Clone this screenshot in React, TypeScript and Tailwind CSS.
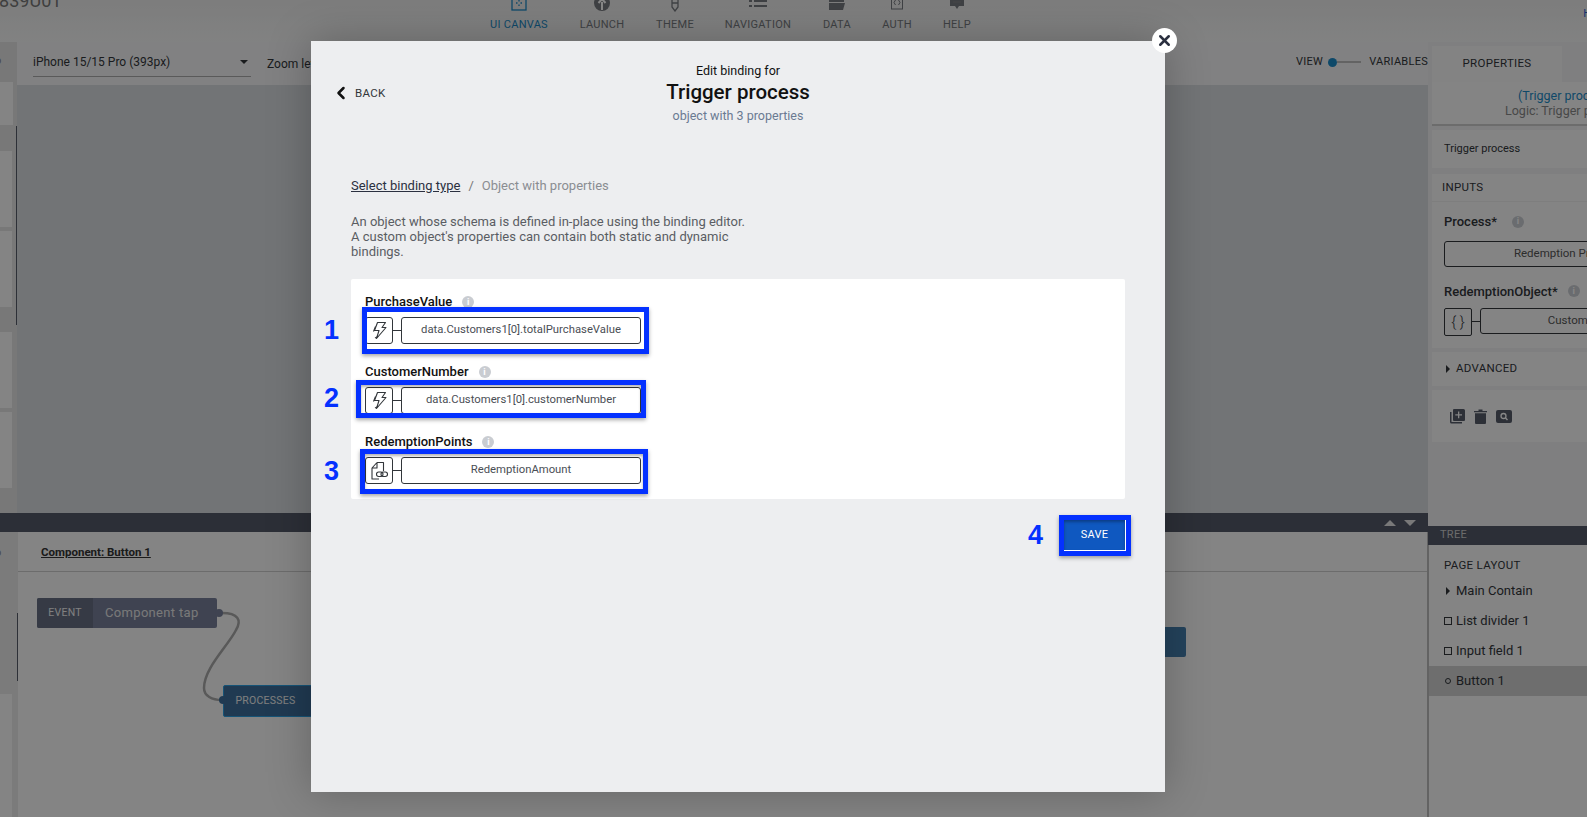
import { ChevronLeft, X } from "lucide-react";

function NavIcon({ name }: { name: string }) {
  if (name === "UI CANVAS")
    return (
      <svg width="18" height="18" viewBox="0 0 18 18" fill="none" stroke="currentColor" strokeWidth="1.3">
        <rect x="2" y="2" width="14" height="14" />
        <path d="M9 6v1.5M9 10.5V12M6 9h1.5M10.5 9H12" />
      </svg>
    );
  if (name === "LAUNCH")
    return (
      <svg width="18" height="18" viewBox="0 0 18 18">
        <circle cx="9" cy="9" r="8" fill="currentColor" />
        <path d="M9 16V8M5.5 9L9 5l3.5 4" fill="none" stroke="#fff" strokeWidth="2" />
      </svg>
    );
  if (name === "THEME")
    return (
      <svg width="18" height="18" viewBox="0 0 18 18" fill="none" stroke="currentColor" strokeWidth="1.3">
        <path d="M6 1v12l3 4 3-4V1M6 9h6" />
      </svg>
    );
  if (name === "NAVIGATION")
    return (
      <svg width="18" height="18" viewBox="0 0 18 18" fill="none" stroke="currentColor" strokeWidth="2">
        <path d="M5 5h13M5 10h13M0 5h3M0 10h3" transform="translate(0 2)" />
      </svg>
    );
  if (name === "DATA")
    return (
      <svg width="18" height="18" viewBox="0 0 18 18" fill="currentColor">
        <path d="M1 3h6l2 2h7v3H1zM1 9h16l-2 7H1z" />
      </svg>
    );
  if (name === "AUTH")
    return (
      <svg width="18" height="18" viewBox="0 0 18 18" fill="none" stroke="currentColor" strokeWidth="1">
        <rect x="3.5" y="2" width="11" height="13" />
        <path d="M7.5 6L6 8.500l1.500 2.500M10.500 6L12 8.500l-1.500 2.500" />
      </svg>
    );
  return (
    <svg width="18" height="18" viewBox="0 0 18 18" fill="currentColor">
      <path d="M2 1h14v11h-5l-2 3-2-3H2z" />
      <path d="M5 5h8M5 8h8" stroke="#888" strokeWidth="1" />
    </svg>
  );
}

const navItems = [
  { label: "UI CANVAS", width: "w-[82px]", active: true },
  { label: "LAUNCH", width: "w-[84px]" },
  { label: "THEME", width: "w-[62px]" },
  { label: "NAVIGATION", width: "w-[104px]" },
  { label: "DATA", width: "w-[54px]" },
  { label: "AUTH", width: "w-[66px]", raised: true },
  { label: "HELP", width: "w-[54px]" },
];

function InfoDot() {
  return (
    <span className="flex h-[12px] w-[12px] items-center justify-center rounded-full bg-[#c9ccd1] text-[9px] leading-none font-bold text-white">
      i
    </span>
  );
}

function Bolt() {
  return (
    <svg width="17" height="19" viewBox="0 0 17 19" fill="none" stroke="#32363a" strokeWidth="1.1" strokeLinejoin="round">
      <path d="M6.5 1.500h8l-3.500 5h4l-9.500 11 2.500-8H3.500z" />
      <path d="M4.500 5.500l-2 5M7 15.500l-3 1.500" />
    </svg>
  );
}

function DocLink() {
  return (
    <svg width="19" height="20" viewBox="0 0 19 20" fill="none" stroke="#32363a" strokeWidth="1.1" strokeLinejoin="round">
      <path d="M7 1.500h6.500V10M7 1.500L2 7v11h7M2 7h5V1.500" />
      <rect x="6.500" y="11" width="6.500" height="4.500" rx="2.200" />
      <rect x="11" y="11" width="6.500" height="4.500" rx="2.200" />
    </svg>
  );
}

function Binding({ label, value, icon, mark }: { label: string; value: string; icon: React.ReactNode; mark: string }) {
  return (
    <div>
      <div className="flex h-[16px] items-center gap-[10px] text-[13px] font-medium text-[#111]">
        {label}
        <InfoDot />
      </div>
      <div className="relative mt-[7px] flex h-[27px] w-[276px] items-center">
        <div className="flex h-[27px] w-[28px] items-center justify-center rounded-[3px] border border-[#32363a] bg-white">{icon}</div>
        <div className="h-px w-[8px] bg-[#32363a]" />
        <div className="flex h-[27px] flex-1 items-center justify-center rounded-[3px] border border-[#32363a] bg-white text-[11.3px] text-[#4a4e55]">
          {value}
        </div>
        <div className={mark} />
      </div>
    </div>
  );
}

function Card({ className = "", children }: { className?: string; children?: React.ReactNode }) {
  return <div className={`bg-[#fafafa] ${className}`}>{children}</div>;
}

export default function App() {
  return (
    <div className="relative flex h-screen w-full flex-col overflow-hidden bg-white font-['Roboto',sans-serif] text-[#32363a]">
      {/* Top bar, scrolled a little past its top edge */}
      <header className="relative flex h-[42px] shrink-0 items-end overflow-hidden bg-gradient-to-b from-[#ececec] to-[#f4f5f5] pb-[9px]">
        <span className="absolute top-[-13px] left-[-11px] text-[18px] text-[#777]">1839U01</span>
        <nav className="ml-[478px] flex">
          {navItems.map(({ label, width, active, raised }) => (
            <div key={label} className={`flex ${width} flex-col items-center ${raised ? "mb-[2px]" : ""} ${active ? "text-[#1c8ac7]" : "text-[#777b80]"}`}>
              <NavIcon name={label} />
              <span className="mt-[6px] text-[11px] leading-[13px] tracking-wide">{label}</span>
            </div>
          ))}
        </nav>
        <span className="absolute top-[6px] right-[-4px] text-[11px] text-[#2f5fd0]">H</span>
      </header>

      <div className="flex min-h-0 flex-1">
        <div className="flex min-w-0 flex-1 flex-col">
          {/* Preview area */}
          <div className="flex h-[471px] shrink-0">
            <aside className="relative w-[17px] shrink-0 bg-[#e2e2e2]">
              <div className="h-[40px] overflow-hidden pt-[11px] text-[11px] text-[#888]"><span className="ml-[-5px]">o</span></div>
              <Card className="h-[43px] w-[13px]" />
              <Card className="mt-[26px] h-[76px] w-[12px]" />
              <Card className="mt-[4px] h-[76px] w-[12px]" />
              <Card className="mt-[25px] h-[76px] w-[12px]" />
              <Card className="mt-[4px] h-[76px] w-[12px]" />
              <div className="absolute top-[84px] right-0 h-[199px] w-px bg-[#555b69]" />
            </aside>
            <div className="flex min-w-0 flex-1 flex-col">
              <div className="flex h-[43px] shrink-0 items-start bg-[#f4f4f5]">
                <div className="mt-[10px] ml-[16px] flex h-[25px] w-[218px] items-center justify-between border-b border-[#aaa] pb-[4px] text-[12px]">
                  iPhone 15/15 Pro (393px)
                  <span className="mr-[3px] h-0 w-0 border-x-[4px] border-t-[4px] border-x-transparent border-t-[#32363a]" />
                </div>
                <span className="mt-[13px] ml-[16px] text-[12px]">Zoom level</span>
                <div className="ml-auto flex h-[40px] items-center text-[11px] tracking-wide">
                  <span>VIEW</span>
                  <span className="ml-[5px] h-[9px] w-[9px] rounded-full bg-[#1c8ac7]" />
                  <span className="h-[2px] w-[24px] bg-[#bbb]" />
                  <span className="ml-[8px]">VARIABLES</span>
                </div>
              </div>
              <div className="flex-1 bg-[#d8dcdf]" />
            </div>
          </div>

          {/* Resize bar */}
          <div className="flex h-[19px] shrink-0 items-center justify-end gap-[8px] bg-[#535968] pr-[12px]">
            <span className="h-0 w-0 border-x-[6px] border-b-[6px] border-x-transparent border-b-[#e5e5e5]" />
            <span className="h-0 w-0 border-x-[6px] border-t-[6px] border-x-transparent border-t-[#e5e5e5]" />
          </div>

          {/* Logic canvas */}
          <div className="flex min-h-0 flex-1 bg-[#fafafa]">
            <aside className="relative w-[18px] shrink-0 bg-[#e8e8e8] pt-[13px] text-[11px] text-[#888]">
              <span className="ml-[-5px]">o</span>
              <div className="absolute top-[81px] right-0 h-[68px] w-px bg-[#555b69]" />
              <Card className="absolute top-[162px] h-[124px] w-[12px]" />
            </aside>
            <div className="relative min-w-0 flex-1 border-r border-[#bbb]">
              <div className="h-[40px] border-b border-[#ccc] pt-[12px] pl-[23px] text-[11.5px] leading-[16px] font-bold text-[#333]">
                <span className="underline">Component: Button 1</span>
              </div>
              {/* nodes sit at free positions on the canvas */}
              <div className="absolute top-[66px] left-[19px] flex h-[30px] w-[180px] items-center rounded-[2px] bg-[#777f99]">
                <span className="flex h-full w-[56px] items-center justify-center rounded-l-[2px] bg-[#666e82] text-[10.5px] tracking-wide text-[#f2f2f2]">EVENT</span>
                <span className="ml-[12px] text-[13px] tracking-wide text-[#e5e5e5]">Component tap</span>
              </div>
              <div className="absolute top-[153px] left-[205px] flex h-[32px] w-[120px] items-center rounded-[2px] border border-[#2a9fe0] bg-[#3d6f9c]">
                <span className="flex h-full w-[83px] items-center justify-center text-[10.5px] tracking-wide text-[#efefef]">PROCESSES</span>
              </div>
              <div className="absolute top-[95px] left-[1100px] h-[30px] w-[68px] rounded-[2px] bg-[#447fae]" />
              <svg className="absolute top-[70px] left-[170px]" width="70" height="110" viewBox="0 0 70 110" fill="none">
                <path d="M34 11C50 11 54 18 48 28C40 44 16 66 16 86C16 94 24 98 34 98" stroke="#a8a8a8" strokeWidth="2.500" />
                <circle cx="31" cy="11" r="4" fill="#777f99" />
                <circle cx="35" cy="98" r="4" fill="#3d6f9c" />
              </svg>
            </div>
          </div>
        </div>

        {/* Right panel */}
        <aside className="flex w-[159px] shrink-0 flex-col overflow-hidden bg-[#f0f0f1]">
          <div className="h-[484px] shrink-0 pl-[4px]">
            <div className="mt-[4px] flex h-[36px] w-[130px] items-center justify-center bg-[#f8f8f8] text-[11.5px] tracking-wide">PROPERTIES</div>
            <div className="flex h-[44px] w-[258px] flex-col items-start border-b-2 border-[#ccc] bg-[#fafafa] pl-[86px] text-[12.5px] leading-[15px]">
              <span className="mt-[6px] whitespace-nowrap text-[#1c8ac7]">(Trigger process)</span>
              <span className="ml-[-13px] whitespace-nowrap text-[#888]">Logic: Trigger process</span>
            </div>
            <Card className="mt-[4px] flex h-[38px] w-[258px] items-center pl-[12px] text-[11px]">Trigger process</Card>
            <Card className="mt-[6px] h-[174px] w-[258px]">
              <div className="flex h-[28px] items-center border-b border-[#eee] pl-[10px] text-[11.5px] tracking-wide">INPUTS</div>
              <div className="mt-[10px] flex items-center gap-[15px] pl-[12px] text-[13px] font-medium">Process*<InfoDot /></div>
              <div className="mt-[9px] ml-[12px] flex h-[26px] items-center justify-center rounded-[3px] border border-[#32363a] text-[11.5px] text-[#555]">Redemption Process</div>
              <div className="mt-[15px] flex items-center gap-[10px] pl-[12px] text-[13px] font-medium">RedemptionObject*<InfoDot /></div>
              <div className="mt-[7px] ml-[12px] flex items-start">
                <div className="flex h-[28px] w-[28px] items-center justify-center rounded-[2px] border border-[#32363a] text-[15px] font-light">{"{ }"}</div>
                <div className="mt-[13px] h-px w-[8px] bg-[#32363a]" />
                <div className="flex h-[26px] flex-1 items-center justify-center rounded-[3px] border border-[#32363a] text-[11.5px] text-[#555]">Custom object</div>
              </div>
            </Card>
            <Card className="mt-[4px] flex h-[34px] w-[258px] items-center pl-[14px] text-[11.5px] tracking-wide">
              <span className="mr-[6px] h-0 w-0 border-y-[4px] border-l-[4px] border-y-transparent border-l-[#32363a]" />
              ADVANCED
            </Card>
            <Card className="mt-[4px] flex h-[52px] w-[258px] items-center gap-[9px] pl-[18px] text-[#555b69]">
              <svg width="15" height="15" viewBox="0 0 15 15" fill="currentColor">
                <path d="M0 3h1.500v10H12v1.500H1.500A1.500 1.500 0 0 1 0 13z" />
                <path fillRule="evenodd" d="M4 0h9.500A1.500 1.500 0 0 1 15 1.500V11a1 1 0 0 1-1 1H4a1 1 0 0 1-1-1V1a1 1 0 0 1 1-1zm4 2.500v2.700H5.300v1.300H8v2.700h1.300V6.500H12V5.200H9.300V2.500z" />
              </svg>
              <svg width="13" height="15" viewBox="0 0 13 15" fill="currentColor">
                <path d="M0 2h4.500V.500h4V2H13v1.300H0zM1 4.300h11V14a1 1 0 0 1-1 1H2a1 1 0 0 1-1-1z" />
              </svg>
              <svg width="16" height="13" viewBox="0 0 16 13">
                <rect width="16" height="13" rx="2" fill="currentColor" />
                <circle cx="7.500" cy="6" r="2.500" fill="none" stroke="#fff" strokeWidth="1.300" />
                <path d="M9.500 8l2 2" stroke="#fff" strokeWidth="1.500" />
              </svg>
            </Card>
          </div>
          <div className="flex h-[19px] shrink-0 items-center bg-[#535968] pl-[12px] text-[11px] tracking-wide text-[#ccc]">TREE</div>
          <div className="flex-1 border-l border-[#bbb] bg-[#fafafa]">
            <div className="h-[13px]" />
            <div className="pl-[15px] text-[11.5px] leading-[14px] tracking-wide">PAGE LAYOUT</div>
            <div className="mt-[4px] text-[13px]">
              <div className="flex h-[30px] items-center pl-[16px]"><span className="mr-[6px] ml-[1px] h-0 w-0 border-y-[4px] border-l-[4px] border-y-transparent border-l-[#32363a]" />Main Contain</div>
              <div className="flex h-[30px] items-center pl-[15px]"><span className="mr-[4px] h-[8px] w-[8px] border border-[#32363a]" />List divider 1</div>
              <div className="flex h-[30px] items-center pl-[15px]"><span className="mr-[4px] h-[8px] w-[8px] border border-[#32363a]" />Input field 1</div>
              <div className="flex h-[30px] items-center bg-[#d0d0d0] pl-[15px]"><span className="mx-[1px] mr-[5px] h-[6px] w-[6px] rounded-full border border-[#32363a]" />Button 1</div>
            </div>
          </div>
        </aside>
      </div>

      {/* Dialog backdrop */}
      <div className="absolute inset-0 bg-black/[0.47]" />

      {/* Edit binding dialog */}
      <div className="absolute top-[41px] left-[311px] flex h-[751px] w-[854px] flex-col bg-[#edeef0] shadow-[0_0_40px_rgba(0,0,0,0.25)]">
        <button className="absolute top-[-13px] right-[-12px] flex h-[25px] w-[25px] items-center justify-center rounded-full bg-white">
          <X size={17} strokeWidth={3.500} className="text-[#2b3040]" />
        </button>
        <div className="relative h-[136px] shrink-0 pt-[22px] text-center">
          <div className="absolute top-[42px] left-[20px] flex items-center gap-[4px] text-[11.5px] leading-[20px] tracking-wide text-[#32363a]">
            <ChevronLeft size={20} strokeWidth={3} className="text-[#111]" />
            BACK
          </div>
          <div className="text-[12.5px] leading-[16px] text-[#111]">Edit binding for</div>
          <div className="text-[20.5px] leading-[26px] font-medium text-[#111]">Trigger process</div>
          <div className="mt-[1px] text-[12.5px] leading-[20px] text-[#6a7a92]">object with 3 properties</div>
        </div>
        <div className="pl-[40px] text-[13px]">
          <div className="flex leading-[18px]">
            <span className="text-[#2b3040] underline">Select binding type</span>
            <span className="mx-[8px] text-[#777]">/</span>
            <span className="text-[#8a8d92]">Object with properties</span>
          </div>
          <p className="mt-[19px] w-[400px] leading-[15px] text-[#5a5d63]">
            An object whose schema is defined in-place using the binding editor.
            <br />
            A custom object's properties can contain both static and dynamic bindings.
          </p>
          <div className="relative mt-[20px] flex h-[220px] w-[774px] flex-col gap-[20px] rounded-[2px] bg-white pt-[15px] pl-[14px]">
            <Binding
              label="PurchaseValue"
              value="data.Customers1[0].totalPurchaseValue"
              icon={<Bolt />}
              mark="absolute top-[-10px] left-[-3px] h-[47px] w-[287px] border-[5px] border-[#0431ff] shadow-[0_2px_4px_rgba(0,0,0,0.35)]"
            />
            <Binding
              label="CustomerNumber"
              value="data.Customers1[0].customerNumber"
              icon={<Bolt />}
              mark="absolute top-[-7px] left-[-9px] h-[38px] w-[290px] border-[5px] border-[#0431ff] shadow-[0_2px_4px_rgba(0,0,0,0.35),inset_0_2px_3px_rgba(0,0,0,0.3)]"
            />
            <Binding
              label="RedemptionPoints"
              value="RedemptionAmount"
              icon={<DocLink />}
              mark="absolute top-[-8px] left-[-5px] h-[45px] w-[288px] border-[5px] border-[#0431ff] shadow-[0_2px_4px_rgba(0,0,0,0.35),inset_0_2px_3px_rgba(0,0,0,0.3)]"
            />
            <span className="absolute top-[38px] left-[-27px] font-['Liberation_Sans',sans-serif] text-[27px] leading-[27px] font-bold text-[#0431ff]">1</span>
            <span className="absolute top-[106px] left-[-27px] font-['Liberation_Sans',sans-serif] text-[27px] leading-[27px] font-bold text-[#0431ff]">2</span>
            <span className="absolute top-[179px] left-[-27px] font-['Liberation_Sans',sans-serif] text-[27px] leading-[27px] font-bold text-[#0431ff]">3</span>
          </div>
          <div className="mt-[16px] flex w-[780px] items-center justify-end gap-[16px]">
            <span className="font-['Liberation_Sans',sans-serif] text-[27px] leading-[27px] font-bold text-[#0431ff]">4</span>
            <div className="border-[5px] border-[#0431ff] shadow-[0_2px_4px_rgba(0,0,0,0.35)]">
              <button className="flex h-[31px] w-[62px] items-center justify-center border-r border-b border-white bg-[#0f58c0] text-[11px] tracking-wide text-white shadow-[inset_0_2px_3px_rgba(0,0,0,0.3)]">
                SAVE
              </button>
            </div>
          </div>
        </div>
      </div>
    </div>
  );
}
